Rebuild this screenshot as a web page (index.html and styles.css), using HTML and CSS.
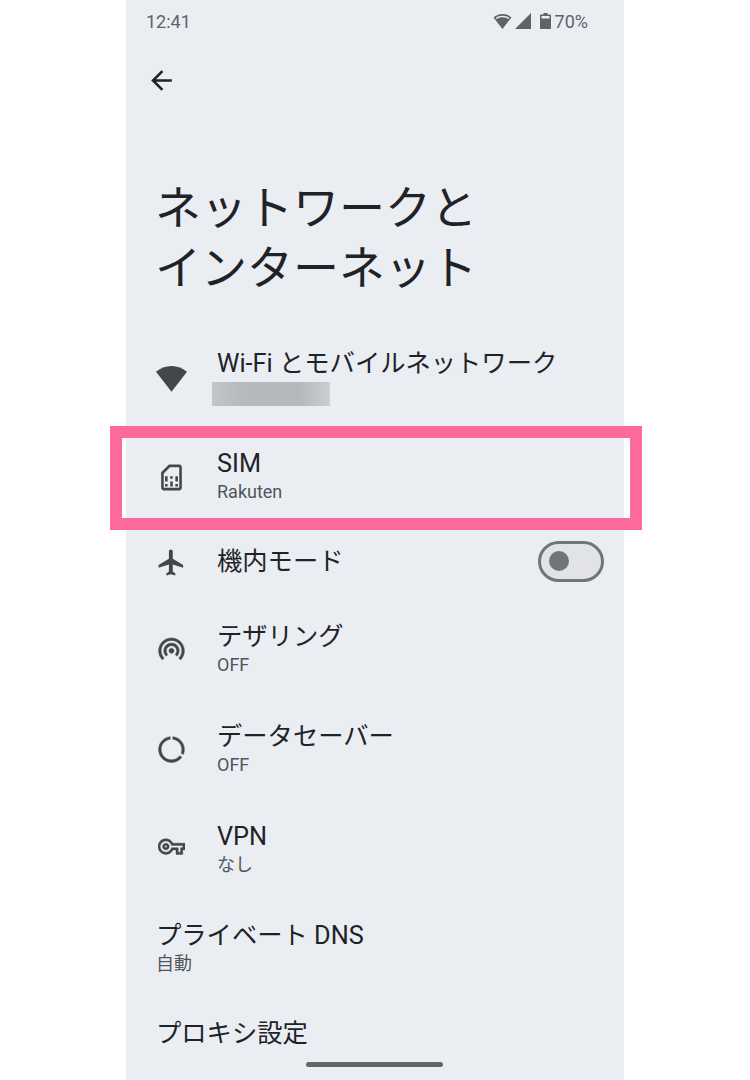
FILE: index.html
```html
<!DOCTYPE html>
<html lang="ja">
<head>
  <meta charset="UTF-8" />
  <meta name="viewport" content="width=device-width, initial-scale=1" />
  <title>ネットワークとインターネット</title>
  <link rel="stylesheet" href="styles.css">
</head>
<body>
  <div class="phone">
    <div class="status-bar">
      <span>12:41</span>
      <div class="status-icons">
        <svg class="st-wifi" viewBox="0 0 24 20"><path d="M12 0C7.400 0 3.200 1.700 0 4.500L12 20 24 4.500C20.800 1.700 16.600 0 12 0zm0 2.200c3.400 0 6.800 1.100 9.200 3L20 6.700C17.800 5.100 15 4.200 12 4.200S6.200 5.100 4 6.700L2.800 5.200C5.200 3.300 8.600 2.200 12 2.200z"/></svg>
        <svg class="st-signal" viewBox="0 0 16 16"><path d="M16 0v16H0z"/></svg>
        <svg class="st-battery" viewBox="0 0 11 16"><path d="M3.500 0h4v1.500H10c.6 0 1 .4 1 1V15c0 .6-.4 1-1 1H1c-.6 0-1-.4-1-1V2.500c0-.6.4-1 1-1h2.500zM1.500 3v2.500h8V3z"/></svg>
        <span>70%</span>
      </div>
    </div>

    <div class="toolbar">
      <svg class="icon back" viewBox="0 0 24 24"><path d="M20 11H7.830l5.590-5.590L12 4l-8 8 8 8 1.410-1.410L7.830 13H20v-2z"/></svg>
    </div>

    <h1 class="page-title">ネットワークと<br>インターネット</h1>

    <div class="list">
      <div class="row">
        <svg class="icon" viewBox="0 0 24 24"><path d="M12 3C7.400 3 3.200 4.800 0 7.600L12 23 24 7.600C20.800 4.800 16.600 3 12 3z"/></svg>
        <div class="row-text">
          <div class="row-title">Wi-Fi とモバイルネットワーク</div>
          <div class="blurred"></div>
        </div>
      </div>

      <div class="row sim-row">
        <svg class="icon" viewBox="0 0 24 24"><path d="M18 2h-8L4 8v12c0 1.100.9 2 2 2h12c1.100 0 2-.9 2-2V4c0-1.100-.9-2-2-2zm0 2v16H6V8.830L10.830 4H18zM7 17h2v2H7zm8 0h2v2h-2zM7 11h2v4H7zm4 4h2v4h-2zm0-4h2v2h-2zm4 0h2v4h-2z"/></svg>
        <div class="row-text">
          <div class="row-title">SIM</div>
          <div class="row-sub">Rakuten</div>
        </div>
        <div class="highlight"></div>
      </div>

      <div class="row row-single">
        <svg class="icon" viewBox="0 0 24 24"><path d="M21 16v-2l-8-5V3.500c0-.83-.67-1.500-1.500-1.500S10 2.670 10 3.500V9l-8 5v2l8-2.500V19l-2 1.500V22l3.500-1 3.500 1v-1.500L13 19v-5.500l8 2.500z"/></svg>
        <div class="row-text">
          <div class="row-title">機内モード</div>
        </div>
        <div class="toggle"><div class="thumb"></div></div>
      </div>

      <div class="row">
        <svg class="icon thick" viewBox="0 0 24 24"><path d="M12 11c-1.100 0-2 .9-2 2 0 .55.23 1.050.59 1.410.36.36.86.59 1.410.59s1.050-.23 1.410-.59c.36-.36.59-.86.59-1.410 0-1.100-.9-2-2-2zm6 2c0-3.310-2.690-6-6-6s-6 2.690-6 6c0 1.660.68 3.150 1.760 4.240l1.420-1.420C8.450 15.100 8 14.110 8 13c0-2.210 1.790-4 4-4s4 1.790 4 4c0 1.110-.45 2.100-1.180 2.820l1.420 1.420C17.320 16.150 18 14.660 18 13zM12 3C6.480 3 2 7.480 2 13c0 2.760 1.120 5.260 2.930 7.070l1.420-1.420C4.900 17.210 4 15.210 4 13c0-4.420 3.580-8 8-8s8 3.580 8 8c0 2.210-.9 4.200-2.350 5.650l1.420 1.420C20.880 18.260 22 15.760 22 13c0-5.520-4.480-10-10-10z"/></svg>
        <div class="row-text">
          <div class="row-title">テザリング</div>
          <div class="row-sub">OFF</div>
        </div>
      </div>

      <div class="row">
        <svg class="icon thick" viewBox="0 0 24 24"><path d="M13 2.050v2.020C16.950 4.560 20 7.920 20 12c0 1.010-.2 1.980-.54 2.870l1.720 1.030C21.690 14.700 22 13.390 22 12c0-5.180-3.950-9.450-9-9.950zM12 20c-4.410 0-8-3.590-8-8 0-4.080 3.050-7.440 7-7.930V2.050C5.950 2.550 2 6.820 2 12c0 5.520 4.470 10 9.990 10 3.310 0 6.240-1.610 8.060-4.090l-1.730-1.040C16.860 18.770 14.580 20 12 20z"/></svg>
        <div class="row-text">
          <div class="row-title">データセーバー</div>
          <div class="row-sub">OFF</div>
        </div>
      </div>

      <div class="row">
        <div class="icon-slot">
          <svg class="icon-key thick" viewBox="0 0 24 24"><path d="M22 19h-6v-4h-2.680c-1.140 2.420-3.600 4-6.320 4-3.860 0-7-3.140-7-7s3.140-7 7-7c2.720 0 5.170 1.580 6.320 4H24v6h-2v4zm-4-2h2v-4h2v-2H11.940l-.23-.67C11.010 8.340 9.110 7 7 7c-2.760 0-5 2.240-5 5s2.240 5 5 5c2.110 0 4.010-1.340 4.710-3.330l.23-.67H18v4zM7 15c-1.650 0-3-1.350-3-3s1.350-3 3-3 3 1.350 3 3-1.350 3-3 3zm0-4c-.55 0-1 .45-1 1s.45 1 1 1 1-.45 1-1-.45-1-1-1z"/></svg>
        </div>
        <div class="row-text">
          <div class="row-title">VPN</div>
          <div class="row-sub">なし</div>
        </div>
      </div>

      <div class="row row-dns">
        <div class="row-text">
          <div class="row-title">プライベート DNS</div>
          <div class="row-sub">自動</div>
        </div>
      </div>

      <div class="row row-last">
        <div class="row-text">
          <div class="row-title">プロキシ設定</div>
        </div>
      </div>
    </div>

    <div class="home-bar"></div>
  </div>
</body>
</html>
```

FILE: styles.css
```css
html, body {
  margin: 0;
  padding: 0;
  height: 1080px;
  overflow: hidden;
  background: #ffffff;
  font-family: Roboto, 'Noto Sans CJK JP', sans-serif;
  color: #1f2328;
}

.phone {
  position: relative;
  width: 498px;
  height: 1080px;
  margin: 0 auto;
  background: #eaeef3;
}

.status-bar {
  display: flex;
  justify-content: space-between;
  align-items: center;
  height: 42px;
  padding: 0 36px 0 20px;
  font-size: 18px;
  color: #5f6368;
}

.status-icons {
  display: flex;
  align-items: center;
}

.status-icons svg {
  fill: #5f6368;
}

.st-wifi {
  width: 19px;
  height: 15px;
  margin-right: 1px;
}

.st-signal {
  width: 16px;
  height: 16px;
  margin-left: 2px;
}

.st-battery {
  width: 11px;
  height: 16px;
  margin: 0 4px 0 9px;
}

.toolbar {
  display: flex;
  align-items: center;
  height: 76px;
  padding-left: 20px;
}

.icon {
  flex: none;
  width: 31px;
  height: 31px;
  fill: #43474c;
}

.back {
  fill: #1f2328;
}

.thick {
  stroke: #43474c;
  stroke-width: 0.35;
}

.page-title {
  margin: 60px 0 0;
  padding-left: 29px;
  font-size: 46px;
  font-weight: 400;
  line-height: 60px;
}

.list {
  margin-top: 29px;
}

.row {
  display: flex;
  align-items: center;
  gap: 30px;
  height: 100px;
  padding: 0 20px 0 30px;
}

.row-single {
  height: 70px;
  padding-bottom: 2px;
}

.row-dns {
  height: 99px;
  margin-top: -1px;
}

.row-last {
  height: 74px;
}

.row-text {
  flex: 1;
  min-width: 0;
}

.sim-row .row-text {
  margin-bottom: 2px;
}

.row-title {
  font-size: 25.3px;
  line-height: 32px;
}

.row-sub {
  font-size: 18px;
  line-height: 24px;
  color: #50555b;
}

.blurred {
  width: 118px;
  height: 24px;
  margin: 2px 0 0 -5px;
  background: linear-gradient(90deg, #c2c5c9, #b6b9bd 25%, #b5b8bc 75%, #cbced2);
}

.icon-slot {
  display: flex;
  justify-content: center;
  align-items: center;
  flex: none;
  width: 31px;
  height: 31px;
  margin-bottom: 5px;
}

.icon-key {
  width: 27px;
  height: 27px;
  fill: #43474c;
}

.sim-row {
  position: relative;
}

/* pink frame laid over the SIM row */
.highlight {
  position: absolute;
  left: -16px;
  top: -1px;
  width: 508px;
  height: 80px;
  border: 12px solid #fb6a9b;
}

.toggle {
  display: flex;
  align-items: center;
  box-sizing: border-box;
  width: 66px;
  height: 41px;
  margin-bottom: 2px;
  padding-left: 8px;
  border: 3px solid #70757a;
  border-radius: 21px;
  background: #e1e3e8;
}

.thumb {
  width: 20px;
  height: 20px;
  border-radius: 50%;
  background: #70757a;
}

.home-bar {
  position: absolute;
  left: 180px;
  bottom: 13px;
  width: 137px;
  height: 5px;
  border-radius: 3px;
  background: #63666a;
}
```
